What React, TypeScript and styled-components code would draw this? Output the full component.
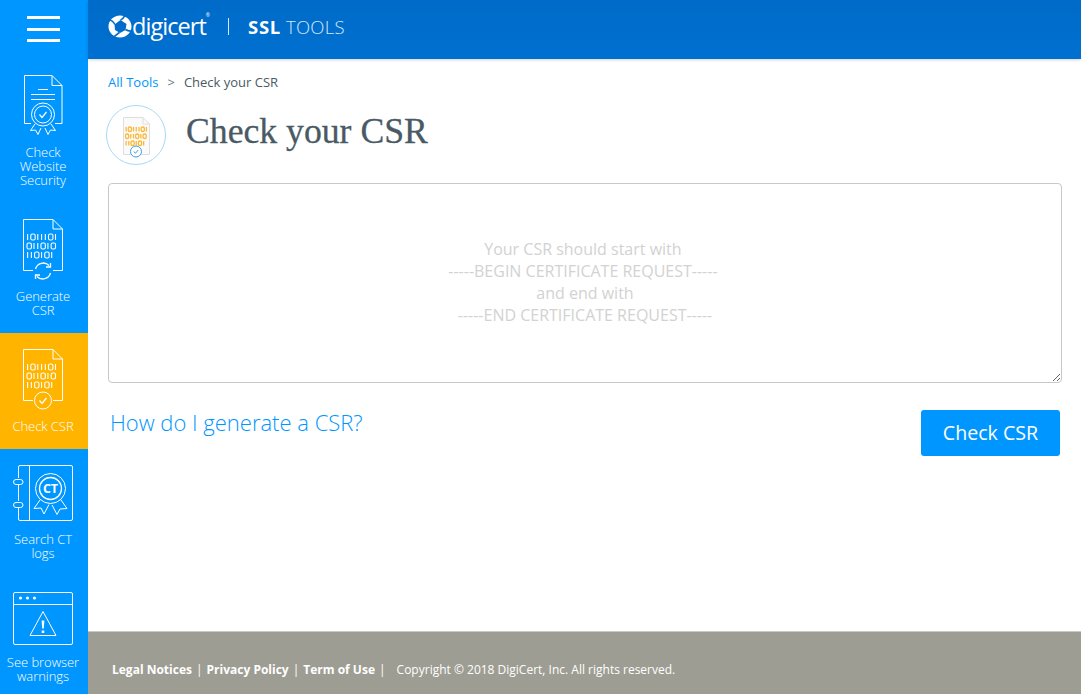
import styled, { createGlobalStyle } from 'styled-components';

const GlobalStyle = createGlobalStyle`
  html, body {
    margin: 0;
    height: 100%;
    overflow: hidden;
    background: #fff;
    font-family: 'Open Sans', 'Liberation Sans', sans-serif;
  }
  #root { height: 100%; }
`;

const Page = styled.div`
  display: grid;
  grid-template-columns: 88px 1fr;
  height: 100vh;
`;

const Sidebar = styled.nav`
  display: flex;
  flex-direction: column;
  background: #0096ff;
`;

const Burger = styled.div`
  height: 59px;
  flex: none;
  box-sizing: border-box;
  padding: 16px 28px 0 27px;
  display: flex;
  flex-direction: column;
  gap: 8.5px;
  span {
    display: block;
    height: 3px;
    background: #fff;
  }
`;

const NavItem = styled.a<{ $h: number; $active?: boolean; $top?: number }>`
  flex: none;
  height: ${(p) => p.$h}px;
  box-sizing: border-box;
  padding-top: ${(p) => p.$top ?? 16}px;
  display: flex;
  flex-direction: column;
  align-items: center;
  color: #fff;
  background: ${(p) => (p.$active ? '#ffb400' : 'transparent')};
`;

const IconSlot = styled.div<{ $h: number }>`
  height: ${(p) => p.$h}px;
  align-self: stretch;
  svg { display: block; }
`;

const NavLabel = styled.div`
  font-size: 13px;
  font-weight: 300;
  line-height: 14px;
  letter-spacing: -0.05px;
  margin: -1px 2px 0 0;
  text-align: center;
  white-space: pre-line;
`;

const Main = styled.div`
  display: flex;
  flex-direction: column;
  min-width: 0;
`;

const Header = styled.header`
  height: 59px;
  flex: none;
  box-sizing: border-box;
  background: linear-gradient(#006bc9, #0070d0);
  box-shadow: 0 1px 3px rgba(0, 0, 0, 0.18);
  display: flex;
  align-items: center;
  padding: 0 0 6px 20px;
  color: #fff;
`;

const Logo = styled.div`
  display: flex;
  align-items: center;
  width: 120px;
`;

const LogoText = styled.span`
  font-family: 'Open Sans', sans-serif;
  font-size: 23.5px;
  font-weight: 400;
  letter-spacing: -0.95px;
  margin-top: -1px;
  position: relative;
  sup {
    position: absolute;
    top: 2px;
    right: -4px;
    font-size: 5px;
    letter-spacing: 0;
  }
`;

const HeaderRule = styled.div`
  width: 1px;
  height: 17px;
  background: rgba(255, 255, 255, 0.85);
`;

const ToolsName = styled.div`
  margin-left: 19px;
  font-family: 'Open Sans', sans-serif;
  font-size: 18.5px;
  font-weight: 300;
  letter-spacing: 0.25px;
  color: #d5e8f8;
  b {
    font-weight: 700;
    color: #fff;
    letter-spacing: 0.7px;
  }
`;

const Content = styled.main`
  flex: 1;
  padding: 14px 19px 0 20px;
`;

const Breadcrumb = styled.div`
  font-size: 13px;
  line-height: 18px;
  color: #4a5a65;
  display: flex;
  a { color: #0096ff; }
  i { font-style: normal; margin: 0 9px; color: #6b7780; }
`;

const TitleRow = styled.div`
  display: flex;
  align-items: center;
  margin: 14px 0 18px -2px;
  height: 60px;
  gap: 20px;
`;

const Title = styled.h1`
  margin: -8px 0 0;
  font-family: 'Liberation Serif', serif;
  font-size: 35.7px;
  font-weight: 400;
  color: #4a5a65;
  -webkit-text-stroke: 0.3px #4a5a65;
`;

const CsrInput = styled.textarea`
  display: block;
  width: 100%;
  height: 200px;
  box-sizing: border-box;
  padding: 54px 12px 0;
  border: 1px solid #c8c8c8;
  border-radius: 4px;
  font-family: 'Open Sans', sans-serif;
  font-size: 16px;
  line-height: 22px;
  text-align: center;
  outline: none;
  &::placeholder {
    color: #d2d2d2;
    opacity: 1;
  }
`;

const Actions = styled.div`
  display: flex;
  justify-content: space-between;
  align-items: flex-start;
  margin: 27px 2px 0 2px;
`;

const HelpLink = styled.a`
  font-size: 22px;
  font-weight: 300;
  line-height: 24px;
  color: #0096ff;
`;

const CheckButton = styled.button`
  width: 139px;
  height: 46px;
  border: 0;
  border-radius: 3px;
  padding: 0 0 2px;
  background: #0096ff;
  color: #fff;
  font-family: 'Open Sans', sans-serif;
  font-size: 19.6px;
  font-weight: 400;
`;

const Footer = styled.footer`
  height: 63px;
  flex: none;
  box-sizing: border-box;
  background: #9e9d93;
  border-top: 1px solid #c9c9c3;
  padding: 29px 0 0 24px;
  display: flex;
  font-size: 12px;
  line-height: 17px;
  color: #fff;
  b { font-weight: 700; }
  i { font-style: normal; margin: 0 4px; }
`;

const Copyright = styled.span`
  margin-left: 7px;
`;

const BITS = ['1011101', '011010', '110101'];

// draws the 1s and 0s of the file icons as little bars and rings
function BitRows({ x, y, color, w = 4.4, h = 6, gap = 9, sw = 1.1 }: { x: number; y: number; color: string; w?: number; h?: number; gap?: number; sw?: number }) {
  return (
    <g stroke={color} fill="none" strokeWidth={sw}>
      {BITS.map((row, r) => {
        let cx = x;
        return row.split('').map((b, i) => {
          const zero = b === '0';
          const el = zero ? (
            <rect key={`${r}-${i}`} x={cx} y={y + r * gap} width={w} height={h} rx={1.6} />
          ) : (
            <line key={`${r}-${i}`} x1={cx + 0.6} x2={cx + 0.6} y1={y + r * gap} y2={y + r * gap + h} />
          );
          cx += zero ? w * 1.45 : w * 0.86;
          return el;
        });
      })}
    </g>
  );
}

const WebsiteIcon = () => (
  <svg width="88" height="71" viewBox="0 75 88 71" fill="none" stroke="#fff" strokeWidth="1">
    <path d="M31 123.5H24.500V75.500H52L62 85.500V123.500H55" />
    <path d="M52 75.500V85.500H62" />
    <path d="M38 89.500H48M31 94.500H55M31 99.500H55" />
    <circle cx="43" cy="114.500" r="11.500" />
    <circle cx="43" cy="114.500" r="8.500" />
    <path d="M39.500 114.500l2.500 3 4.500-5.500" strokeWidth="1.200" />
    <path d="M35 124l-4.500 6.500 5-.5 2.500 4.500 3-6.500M51 124l4.500 6.500-5-.5-2.500 4.500-3-6.500" />
  </svg>
);

const GenerateIcon = () => (
  <svg width="88" height="71" viewBox="0 219 88 71" fill="none" stroke="#fff" strokeWidth="1">
    <path d="M33 270.500H23.500V219.500H53L62.500 229V270.500H53" />
    <path d="M53 219.500V229H62.500" />
    <BitRows x={27} y={234} color="#fff" />
    <path d="M35.500 269a8 8 0 0 1 13.500-3.500" strokeWidth="1.300" />
    <path d="M50.500 273a8 8 0 0 1-13.500 3.500" strokeWidth="1.300" />
    <path d="M50.500 263v4h-4.500M35.500 279v-4h4.500" strokeWidth="1.300" />
  </svg>
);

const CheckIcon = () => (
  <svg width="88" height="71" viewBox="0 349 88 71" fill="none" stroke="#fff" strokeWidth="1">
    <path d="M33 400.500H23.500V349.500H53L62.500 359V400.500H53" />
    <path d="M53 349.500V359H62.500" />
    <BitRows x={27} y={364} color="#fff" />
    <circle cx="43" cy="400.500" r="8.500" />
    <path d="M39.500 400.500l2.500 3 4.500-5.500" strokeWidth="1.300" />
  </svg>
);

const CtIcon = () => (
  <svg width="88" height="68" viewBox="0 465 88 68" fill="none" stroke="#fff" strokeWidth="1">
    <path d="M18.500 478v-11a1.500 1.500 0 0 1 1.500-1.500h51a1.500 1.500 0 0 1 1.500 1.500v52a1.500 1.500 0 0 1-1.500 1.500H20a1.500 1.500 0 0 1-1.500-1.500v-11M18.500 485v16" />
    <path d="M29.500 465.500v55" />
    <rect x="13.500" y="479.500" width="9.500" height="5" rx="2.500" />
    <rect x="13.500" y="502.500" width="9.500" height="5" rx="2.500" />
    <circle cx="50.500" cy="488.500" r="15" />
    <circle cx="50.500" cy="488.500" r="11" strokeWidth="1.300" />
    <text x="50.500" y="493" textAnchor="middle" fill="#fff" stroke="none" fontFamily="'Open Sans', sans-serif" fontWeight="700" fontSize="12.500">CT</text>
    <path d="M40 500l-6 8.500 7-.5 3 6 5-9.500M61 500l6 8.500-7 .5-3 5.500-5-9.500" />
  </svg>
);

const WarningIcon = () => (
  <svg width="88" height="64" viewBox="0 592 88 64" fill="none" stroke="#fff" strokeWidth="1">
    <rect x="13.500" y="592.500" width="59" height="52" rx="1.500" />
    <path d="M13.500 604.500H72.500" />
    <g fill="#fff" stroke="none">
      <circle cx="20.500" cy="598" r="1.600" />
      <circle cx="27.500" cy="598" r="1.600" />
      <circle cx="34.500" cy="598" r="1.600" />
      <path d="M41.600 620.500h2.800l-.6 8h-1.600zM41.700 630.500h2.600v2.500h-2.600z" />
    </g>
    <path d="M43 611.500L56 635.500H30z" strokeLinejoin="round" />
  </svg>
);

const BrandMark = () => (
  <svg width="24" height="23" viewBox="0 0 24 23">
    <path fillRule="evenodd" fill="#fff" d="M12 0.500C18.500 .5 23.500 5.500 23.500 11.500S18.500 22.500 12 22.500 .5 17.500 .5 11.500 5.500 .5 12 .5ZM12.500 5L6.500 9.500 7 15 12 18 17.500 15 18.500 9Z" />
    <path fill="none" stroke="#006dcc" strokeWidth="1.600" d="M0 4.500C3 5 5.500 6.500 6.800 9.500M17 0.500C15.500 3 14.500 4.500 12.500 5M24 16C21 16.500 19 15.500 17.500 14.500M5 23C7 21 9.500 18.500 11.500 17.500" />
  </svg>
);

const CsrBadge = () => (
  <svg width="60" height="60" viewBox="0 0 60 60" fill="none">
    <circle cx="30" cy="30" r="29.500" stroke="#a9d8f7" />
    <path d="M17.500 12.500H37L43.500 19V49.500H17.500Z" fill="#fafafa" stroke="#dedede" />
    <path d="M37 12.500V19H43.500" stroke="#dedede" />
    <BitRows x={19.500} y={22} color="#fdb833" w={3.200} h={4.500} gap={7} sw={1.300} />
    <circle cx="30" cy="46.500" r="5.500" fill="#fff" stroke="#3f9fe0" />
    <path d="M27.800 46.500l1.600 1.800 2.800-3.300" stroke="#3f9fe0" />
  </svg>
);

const PLACEHOLDER = [
  'Your CSR should start with ',
  '-----BEGIN CERTIFICATE REQUEST----- ',
  'and end with',
  '-----END CERTIFICATE REQUEST-----',
].join('\n');

export default function App() {
  return (
    <>
      <GlobalStyle />
      <Page>
        <Sidebar>
          <Burger>
            <span />
            <span />
            <span />
          </Burger>
          <NavItem $h={144}>
            <IconSlot $h={71}>
              <WebsiteIcon />
            </IconSlot>
            <NavLabel>{'Check\nWebsite\nSecurity'}</NavLabel>
          </NavItem>
          <NavItem $h={130}>
            <IconSlot $h={71}>
              <GenerateIcon />
            </IconSlot>
            <NavLabel>{'Generate\nCSR'}</NavLabel>
          </NavItem>
          <NavItem $h={116} $active>
            <IconSlot $h={71}>
              <CheckIcon />
            </IconSlot>
            <NavLabel>Check CSR</NavLabel>
          </NavItem>
          <NavItem $h={124}>
            <IconSlot $h={68}>
              <CtIcon />
            </IconSlot>
            <NavLabel>{'Search CT\nlogs'}</NavLabel>
          </NavItem>
          <NavItem $h={121} $top={19}>
            <IconSlot $h={64}>
              <WarningIcon />
            </IconSlot>
            <NavLabel>{'See browser\nwarnings'}</NavLabel>
          </NavItem>
        </Sidebar>
        <Main>
          <Header>
            <Logo>
              <BrandMark />
              <LogoText>
                digicert<sup>®</sup>
              </LogoText>
            </Logo>
            <HeaderRule />
            <ToolsName>
              <b>SSL</b> TOOLS
            </ToolsName>
          </Header>
          <Content>
            <Breadcrumb>
              <a>All Tools</a>
              <i>&gt;</i>
              <span>Check your CSR</span>
            </Breadcrumb>
            <TitleRow>
              <CsrBadge />
              <Title>Check your CSR</Title>
            </TitleRow>
            <CsrInput placeholder={PLACEHOLDER} />
            <Actions>
              <HelpLink>How do I generate a CSR?</HelpLink>
              <CheckButton>Check CSR</CheckButton>
            </Actions>
          </Content>
          <Footer>
            <b>Legal Notices</b>
            <i>|</i>
            <b>Privacy Policy</b>
            <i>|</i>
            <b>Term of Use</b>
            <i>|</i>
            <Copyright>Copyright © 2018 DigiCert, Inc. All rights reserved.</Copyright>
          </Footer>
        </Main>
      </Page>
    </>
  );
}
